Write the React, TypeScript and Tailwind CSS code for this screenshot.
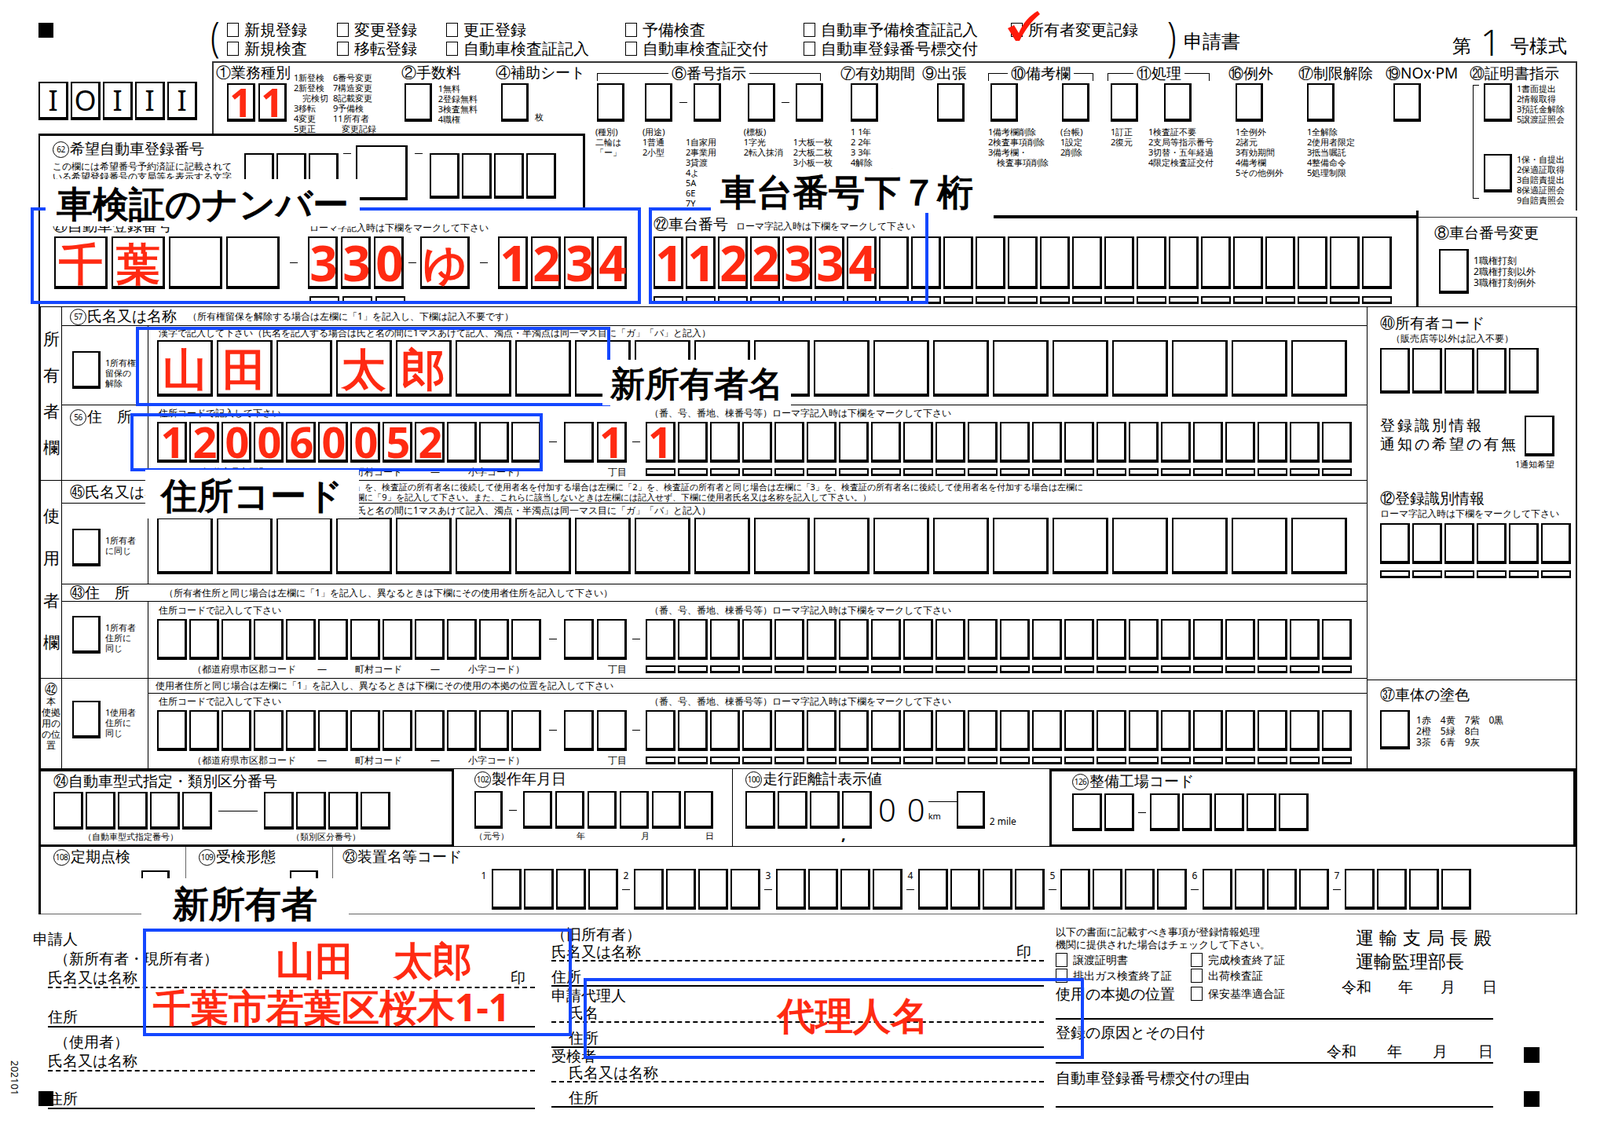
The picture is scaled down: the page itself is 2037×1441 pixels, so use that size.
import React from "react";

const Bx = ({ c, children }: { c: string; children?: React.ReactNode }) => (
  <div className={"shrink-0 flex items-center justify-center border-2 border-black border-b-[4px] border-r-[3px] bg-white overflow-visible " + c}>{children}</div>
);
const Boxes = ({ n, c, g }: { n: number; c: string; g: string }) => (
  <div className={"flex " + g}>
    {Array.from({ length: n }).map((_, i) => (
      <Bx key={i} c={c} />
    ))}
  </div>
);
const Marks = ({ n }: { n: number }) => (
  <div className="flex gap-[3px]">
    {Array.from({ length: n }).map((_, i) => (
      <div key={i} className="w-[38px] h-[10px] border-2 border-black border-b-[3px]" />
    ))}
  </div>
);
const Circ = ({ n }: { n: string }) => (
  <span className="inline-flex items-center justify-center rounded-full border border-black w-[21px] h-[21px] text-[10px] leading-none tracking-tighter mr-[1px] align-[2px]">{n}</span>
);
const Dash = ({ w }: { w: string }) => (
  <div className={"shrink-0 flex items-center justify-center " + w}>
    <div className="w-[10px] border-t border-black" />
  </div>
);
const Red = ({ t, s }: { t: string; s: string }) => (
  <span className={"text-[#ff2a12] font-bold leading-none font-['Liberation_Sans','Noto_Sans_CJK_JP',sans-serif] " + s}>{t}</span>
);
const Small = ({ t, c }: { t: string; c?: string }) => (
  <div className={"whitespace-pre text-[11px] leading-[13px] " + (c || "")}>{t}</div>
);
const Chk = () => <div className="shrink-0 w-[15px] h-[18px] border-[1.5px] border-black mr-[7px]" />;

const Bracket = ({ label, c }: { label: React.ReactNode; c: string }) => (
  <div className={"flex items-center h-[26px] " + c}>
    <div className="flex-1 self-center mt-[10px] h-[10px] border-l border-t border-black" />
    <div className="px-[4px] text-[19px] leading-[24px] whitespace-nowrap">{label}</div>
    <div className="flex-1 self-center mt-[10px] h-[10px] border-r border-t border-black" />
  </div>
);

const AddrRow = () => (
  <div className="flex flex-col pl-[11px]">
    <div className="flex h-[16px] text-[12px] leading-[16px] whitespace-nowrap">
      <div className="w-[627px] pl-[2px]">住所コードで記入して下さい</div>
      <div>（番、号、番地、棟番号等）ローマ字記入時は下欄をマークして下さい</div>
    </div>
    <div className="flex items-center h-[57px]">
      <Boxes n={12} c="w-[38px] h-[52px]" g="gap-[3px]" />
      <Dash w="w-[29px]" />
      <Boxes n={2} c="w-[38px] h-[52px]" g="gap-[4px]" />
      <Dash w="w-[24px]" />
      <Boxes n={22} c="w-[38px] h-[52px]" g="gap-[3px]" />
    </div>
    <div className="flex items-center h-[20px] text-[12px]">
      <div className="w-[574px] pl-[45px] whitespace-pre">（都道府県市区郡コード　　 —　　　町村コード　　　—　　　小字コード）</div>
      <div className="w-[48px]">丁目</div>
      <Marks n={22} />
    </div>
  </div>
);

const AddrRowRed = () => (
  <div className="flex flex-col pl-[11px]">
    <div className="flex h-[16px] text-[12px] leading-[16px] whitespace-nowrap">
      <div className="w-[627px] pl-[2px]">住所コードで記入して下さい</div>
      <div>（番、号、番地、棟番号等）ローマ字記入時は下欄をマークして下さい</div>
    </div>
    <div className="flex items-center h-[57px]">
      <div className="flex gap-[3px]">
        {Array.from({ length: 12 }).map((_, i) => {
          const d = ["1", "2", "0", "0", "6", "0", "0", "5", "2"][i];
          return (
            <Bx key={i} c="w-[38px] h-[52px]">{d ? <Red t={d} s="text-[54px] tracking-[-3px]" /> : null}</Bx>
          );
        })}
      </div>
      <Dash w="w-[29px]" />
      <div className="flex gap-[4px]">
        <Bx c="w-[38px] h-[52px]" />
        <Bx c="w-[38px] h-[52px]"><Red t="1" s="text-[54px]" /></Bx>
      </div>
      <Dash w="w-[24px]" />
      <div className="flex gap-[3px]">
        {Array.from({ length: 22 }).map((_, i) => (
          <Bx key={i} c="w-[38px] h-[52px]">{i === 0 ? <Red t="1" s="text-[54px]" /> : null}</Bx>
        ))}
      </div>
    </div>
    <div className="flex items-center h-[20px] text-[12px]">
      <div className="w-[574px] pl-[45px] whitespace-pre">（都道府県市区郡コード　　 —　　　町村コード　　　—　　　小字コード）</div>
      <div className="w-[48px]">丁目</div>
      <Marks n={22} />
    </div>
  </div>
);

const NameBoxes = ({ red }: { red?: boolean }) => {
  const chars = red ? ["山", "田", "", "太", "郎"] : [];
  return (
    <div className="flex gap-[5px]">
      {Array.from({ length: 20 }).map((_, i) => (
        <Bx key={i} c="w-[71px] h-[72px]">
          {chars[i] ? <Red t={chars[i]} s="text-[56px] font-['Noto_Sans_CJK_JP',sans-serif]" /> : null}
        </Bx>
      ))}
    </div>
  );
};

const VLabel = ({ t }: { t: string }) => (
  <div className="w-[27px] shrink-0 border-r border-black flex flex-col justify-around items-center py-[18px] text-[21px]">
    {t.split("").map((c, i) => (
      <span key={i}>{c}</span>
    ))}
  </div>
);

const ChkCol = ({ t, top }: { t: string; top: string }) => (
  <div className={"w-[110px] shrink-0 border-r border-black flex items-start pl-[13px] " + top}>
    <Bx c="w-[36px] h-[48px]" />
    <Small c="ml-[6px] mt-[8px] text-[11px] leading-[13px]" t={t} />
  </div>
);

export default function App() {
  const chassis = ["1", "1", "2", "2", "3", "3", "4"];
  const H = "text-[19px] leading-[24px] whitespace-nowrap";
  return (
    <div className="w-[2037px] h-[1441px] bg-white relative overflow-hidden text-black font-['Noto_Sans_CJK_JP',sans-serif]">
      {/* Row A */}
      <div className="h-[78px] flex items-start">
        <div className="ml-[49px] mt-[29px] w-[19px] h-[19px] bg-black shrink-0" />
        <div className="ml-[200px] mt-[24px] w-[21px] text-[42px] leading-[44px] font-light scale-y-125">(</div>
        <div className="mt-[26px] grid grid-cols-[140px_139px_228px_227px_264px_200px] text-[20px] leading-[24px] whitespace-nowrap">
          {["新規登録", "変更登録", "更正登録", "予備検査", "自動車予備検査証記入"].map((t) => (
            <div key={t} className="flex items-center">
              <Chk />
              {t}
            </div>
          ))}
          <div className="flex items-center relative">
            <Chk />
            所有者変更記録
            <svg className="absolute left-[-6px] top-[-14px]" width="44" height="42" viewBox="0 0 44 42">
              <path d="M2 24 L10 20 L16 30 C22 16 30 8 40 2 L43 6 C33 14 24 26 17 40 L12 40 Z" fill="#ff1a0a" />
            </svg>
          </div>
          {["新規検査", "移転登録", "自動車検査証記入", "自動車検査証交付", "自動車登録番号標交付"].map((t) => (
            <div key={t} className="flex items-center">
              <Chk />
              {t}
            </div>
          ))}
        </div>
        <div className="mt-[24px] ml-[-1px] w-[21px] text-[42px] leading-[44px] font-light scale-y-125">)</div>
        <div className="mt-[34px] text-[24px]">申請書</div>
        <div className="ml-auto mr-[42px] mt-[30px] flex items-end text-[24px]">
          第<span className="text-[46px] leading-[46px] mx-[12px] font-light font-['Liberation_Sans',sans-serif]">1</span>号様式
        </div>
      </div>

      {/* Row B/C */}
      <div className="flex h-[190px]">
        <div className="ml-[49px] w-[696px] flex flex-col">
          <div className="flex h-[92px]">
            <div className="w-[221px] pt-[26px] flex gap-[3px]">
              {["I", "O", "I", "I", "I"].map((t, i) => (
                <Bx key={i} c="w-[38px] h-[49px]">
                  <span className="text-[36px] font-['Liberation_Sans',sans-serif] leading-none">{t}</span>
                </Bx>
              ))}
            </div>
            <div className="w-[475px] border-t-2 border-l-2 border-[#333] flex">
              <div className="w-[240px] flex">
                <div className="flex flex-col pl-[3px] w-[100px]">
                  <div className={"h-[24px] " + H}>①業務種別</div>
                  <div className="flex gap-[4px] ml-[14px] mt-[2px]">
                    <Bx c="w-[36px] h-[49px]"><Red t="1" s="text-[50px]" /></Bx>
                    <Bx c="w-[36px] h-[49px]"><Red t="1" s="text-[50px]" /></Bx>
                  </div>
                </div>
                <Small c="ml-[2px] mt-[12px] text-[10px] leading-[13px]" t={"1新登検\n2新登検\n　完検切\n3移転\n4変更\n5更正"} />
                <Small c="ml-[6px] mt-[12px] text-[10px] leading-[13px]" t={"6番号変更\n7構造変更\n8記載変更\n9予備検\n11所有者\n　変更記録"} />
              </div>
              <div className="w-[121px] flex flex-col">
                <div className={"h-[24px] " + H}>②手数料</div>
                <div className="flex mt-[2px] ml-[4px]">
                  <Bx c="w-[35px] h-[49px]" />
                  <Small c="ml-[8px]" t={"1無料\n2登録無料\n3検査無料\n4職権"} />
                </div>
              </div>
              <div className="flex-1 flex flex-col">
                <div className={"h-[24px] " + H}>④補助シート</div>
                <div className="flex mt-[2px] ml-[7px] items-end">
                  <Bx c="w-[35px] h-[49px]" />
                  <Small c="ml-[8px]" t="枚" />
                </div>
              </div>
            </div>
          </div>
          <div className="h-[98px] border-t-[3px] border-r-[3px] border-l-2 border-black flex">
            <div className="w-[260px] pl-[16px] pt-[4px]">
              <div className={H}><Circ n="62" />希望自動車登録番号</div>
              <Small c="mt-[4px] text-[12px]" t={"この欄には希望番号予約済証に記載されて\nいる希望登録番号の支局等を表示する文字"} />
            </div>
            <div className="flex items-start mt-[22px]">
              <Boxes n={3} c="w-[38px] h-[58px]" g="gap-[3px]" />
              <Dash w="w-[22px]" />
              <div className="mt-[-10px]"><Bx c="w-[66px] h-[70px]" /></div>
              <Dash w="w-[28px]" />
              <Boxes n={4} c="w-[38px] h-[58px]" g="gap-[3px]" />
            </div>
          </div>
        </div>
        <div className="w-[1263px] border-t-2 border-r-2 border-[#333] flex text-[19px]">
          <div className="w-[315px] flex flex-col">
            <Bracket c="mx-[15px]" label="⑥番号指示" />
            <div className="flex items-center ml-[15px]">
              <Bx c="w-[35px] h-[49px]" />
              <div className="w-[26px]" />
              <Bx c="w-[35px] h-[49px]" />
              <Dash w="w-[27px]" />
              <Bx c="w-[35px] h-[49px]" />
              <div className="w-[34px]" />
              <Bx c="w-[35px] h-[49px]" />
              <Dash w="w-[26px]" />
              <Bx c="w-[35px] h-[49px]" />
            </div>
            <div className="flex ml-[13px] mt-[6px]">
              <Small c="w-[61px]" t={"(種別)\n二輪は\n「ー」"} />
              <Small c="w-[56px]" t={"(用途)\n1普通\n2小型"} />
              <Small c="w-[75px]" t={"\n1自家用\n2事業用\n3貸渡\n4よ\n5A\n6E\n7Y"} />
              <Small c="w-[64px]" t={"(標板)\n1字光\n2転入抹消"} />
              <Small t={"\n1大板一枚\n2大板二枚\n3小板一枚\n4小板二枚"} />
            </div>
          </div>
          <div className="w-[110px] flex flex-col">
            <div className="ml-[10px] h-[26px] leading-[26px] whitespace-nowrap">⑦有効期間</div>
            <div className="ml-[23px]"><Bx c="w-[35px] h-[49px]" /></div>
            <Small c="ml-[23px] mt-[6px]" t={"1 1年\n2 2年\n3 3年\n4解除\n5 1年・指定"} />
          </div>
          <div className="w-[80px] flex flex-col">
            <div className="ml-[4px] h-[26px] leading-[26px] whitespace-nowrap">⑨出張</div>
            <div className="ml-[23px]"><Bx c="w-[35px] h-[49px]" /></div>
          </div>
          <div className="w-[150px] flex flex-col">
            <Bracket c="mx-[8px]" label="⑩備考欄" />
            <div className="flex ml-[11px]">
              <Bx c="w-[35px] h-[49px]" />
              <div className="w-[56px]" />
              <Bx c="w-[35px] h-[49px]" />
            </div>
            <div className="flex ml-[8px] mt-[6px]">
              <Small c="w-[92px]" t={"1備考欄削除\n2検査事項削除\n3備考欄・\n　検査事項削除"} />
              <Small t={"(台帳)\n1設定\n2削除"} />
            </div>
          </div>
          <div className="w-[150px] flex flex-col">
            <Bracket c="mx-[10px]" label="⑪処理" />
            <div className="flex ml-[14px]">
              <Bx c="w-[35px] h-[49px]" />
              <div className="w-[33px]" />
              <Bx c="w-[35px] h-[49px]" />
            </div>
            <div className="flex ml-[14px] mt-[6px]">
              <Small c="w-[48px]" t={"1訂正\n2復元"} />
              <Small t={"1検査証不要\n2支局等指示番号\n3切替・五年経過\n4限定検査証交付"} />
            </div>
          </div>
          <div className="w-[97px] flex flex-col">
            <div className="ml-[14px] h-[26px] leading-[26px] whitespace-nowrap">⑯例外</div>
            <div className="ml-[23px]"><Bx c="w-[35px] h-[49px]" /></div>
            <Small c="ml-[23px] mt-[6px]" t={"1全例外\n2諸元\n3有効期間\n4備考欄\n5その他例外"} />
          </div>
          <div className="w-[110px] flex flex-col">
            <div className="ml-[6px] h-[26px] leading-[26px] whitespace-nowrap">⑰制限解除</div>
            <div className="ml-[17px]"><Bx c="w-[35px] h-[49px]" /></div>
            <Small c="ml-[17px] mt-[6px]" t={"1全解除\n2使用者限定\n3抵当嘱託\n4整備命令\n5処理制限"} />
          </div>
          <div className="w-[105px] flex flex-col">
            <div className="ml-[7px] h-[26px] leading-[26px] whitespace-nowrap">⑲NOx·PM</div>
            <div className="ml-[17px]"><Bx c="w-[35px] h-[49px]" /></div>
          </div>
          <div className="flex-1 flex flex-col">
            <div className="ml-[9px] h-[26px] leading-[26px] whitespace-nowrap">⑳証明書指示</div>
            <div className="flex ml-[13px]">
              <div className="w-[8px] border-l border-t border-b border-black h-[145px] mt-[2px]" />
              <div className="flex flex-col ml-[6px]">
                <div className="flex">
                  <Bx c="w-[36px] h-[49px]" />
                  <Small c="ml-[6px]" t={"1書面提出\n2情報取得\n3預託金解除\n5譲渡証照会"} />
                </div>
                <div className="flex mt-[38px]">
                  <Bx c="w-[36px] h-[49px]" />
                  <Small c="ml-[6px]" t={"1保・自提出\n2保適証取得\n3自賠責提出\n8保適証照会\n9自賠責照会"} />
                </div>
              </div>
            </div>
          </div>
        </div>
      </div>

      {/* Row D car number */}
      <div className="ml-[49px] w-[1959px] h-[122px] flex">
        <div className="w-[777px] border-l-2 border-black flex flex-col">
          <div className="h-[33px] flex items-end pb-[2px]">
            <div className={"pl-[16px] w-[343px] " + H}>㉑自動車登録番号</div>
            <div className="text-[12px]">ローマ字記入時は下欄をマークして下さい</div>
          </div>
          <div className="flex items-center pl-[18px] h-[67px]">
            <div className="flex gap-[5px]">
              {["千", "葉", "", ""].map((t, i) => (
                <Bx key={i} c="w-[68px] h-[67px]">{t ? <Red t={t} s="text-[56px] font-['Noto_Sans_CJK_JP',sans-serif]" /> : null}</Bx>
              ))}
            </div>
            <Dash w="w-[36px]" />
            <div className="flex gap-[4px]">
              {["3", "3", "0"].map((t, i) => (
                <Bx key={i} c="w-[38px] h-[67px]"><Red t={t} s="text-[62px] tracking-[-3px]" /></Bx>
              ))}
            </div>
            <Dash w="w-[21px]" />
            <Bx c="w-[63px] h-[67px]"><Red t="ゆ" s="text-[56px] font-['Noto_Sans_CJK_JP',sans-serif]" /></Bx>
            <Dash w="w-[36px]" />
            <div className="flex gap-[4px]">
              {["1", "2", "3", "4"].map((t, i) => (
                <Bx key={i} c="w-[38px] h-[67px]"><Red t={t} s="text-[62px] tracking-[-3px]" /></Bx>
              ))}
            </div>
          </div>
          <div className="ml-[343px] mt-[9px] flex gap-[4px]">
            {[0, 1, 2].map((i) => (
              <div key={i} className="w-[38px] h-[10px] border-2 border-black border-b-[3px]" />
            ))}
          </div>
        </div>
        <div className="w-[980px] border-r-[3px] border-black flex flex-col">
          <div className="h-[33px] flex items-start">
            <div className="pl-[6px] pt-[4px] text-[19px] leading-[26px] whitespace-nowrap">㉒車台番号<span className="text-[12px] ml-[10px]">ローマ字記入時は下欄をマークして下さい</span></div>
            <div className="ml-[100px] mt-[6px] flex-1 border-t-[4px] border-black" />
          </div>
          <div className="flex pl-[6px] gap-[3px] h-[67px]">
            {Array.from({ length: 23 }).map((_, i) => (
              <Bx key={i} c="w-[38px] h-[67px]">{chassis[i] ? <Red t={chassis[i]} s="text-[62px] tracking-[-3px]" /> : null}</Bx>
            ))}
          </div>
          <div className="pl-[6px] mt-[9px]"><Marks n={23} /></div>
        </div>
        <div className="flex-1 border-t border-r-2 border-[#333] mt-[8px] flex flex-col">
          <div className="pl-[20px] pt-[6px] text-[19px] leading-[26px] whitespace-nowrap">⑧車台番号変更</div>
          <div className="flex ml-[26px] mt-[8px]">
            <Bx c="w-[38px] h-[57px]" />
            <Small c="ml-[6px] mt-[8px] text-[12px] leading-[14px]" t={"1職権打刻\n2職権打刻以外\n3職権打刻例外"} />
          </div>
        </div>
      </div>

      {/* Main table */}
      <div className="ml-[49px] w-[1959px] border-l-[3px] border-r-2 border-t border-black flex flex-col">
        <div className="flex h-[588px] border-b border-black">
          <div className="w-[1689px] flex flex-col border-r border-black">
            {/* Owner */}
            <div className="h-[221px] flex border-b border-black">
              <VLabel t="所有者欄" />
              <div className="flex-1 flex flex-col">
                <div className="h-[24px] border-b border-black flex items-center pl-[10px] whitespace-nowrap">
                  <span className="text-[19px]"><Circ n="57" />氏名又は名称</span>
                  <span className="text-[12px] ml-[14px]">（所有権留保を解除する場合は左欄に「1」を記入し、下欄は記入不要です）</span>
                </div>
                <div className="h-[103px] border-b border-black flex">
                  <ChkCol top="pt-[32px]" t={"1所有権\n留保の\n解除"} />
                  <div className="flex flex-col pl-[11px]">
                    <div className="h-[18px] text-[12px] leading-[18px] pl-[2px] whitespace-nowrap">漢字で記入して下さい（氏名を記入する場合は氏と名の間に1マスあけて記入、濁点・半濁点は同一マス目に「ガ」「バ」と記入）</div>
                    <NameBoxes red />
                  </div>
                </div>
                <div className="flex-1 flex">
                  <div className="w-[110px] shrink-0 border-r border-black pl-[10px] pt-[2px] text-[19px] leading-[24px] whitespace-nowrap"><Circ n="56" />住　所</div>
                  <div className="pt-[2px]"><AddrRowRed /></div>
                </div>
              </div>
            </div>
            {/* User */}
            <div className="h-[254px] flex border-b border-black">
              <VLabel t="使用者欄" />
              <div className="flex-1 flex flex-col">
                <div className="h-[29px] border-b border-black flex items-start pl-[10px] whitespace-nowrap">
                  <span className="text-[19px] leading-[28px] w-[160px]">㊺氏名又は名称</span>
                  <Small c="text-[11px] leading-[13px] mt-[1px]" t={"（検査証の所有者と同じ場合は左欄に「1」を、検査証の所有者名に後続して使用者名を付加する場合は左欄に「2」を、検査証の所有者と同じ場合は左欄に「3」を、検査証の所有者名に後続して使用者名を付加する場合は左欄に\n「2」を、新規登録時に流用する場合は左欄に「9」を記入して下さい。また、これらに該当しないときは左欄には記入せず、下欄に使用者氏名又は名称を記入して下さい。）"} />
                </div>
                <div className="h-[103px] border-b border-black flex">
                  <ChkCol top="pt-[32px]" t={"1所有者\nに同じ"} />
                  <div className="flex flex-col pl-[11px]">
                    <div className="h-[18px] text-[12px] leading-[18px] pl-[2px] whitespace-nowrap">漢字で記入して下さい（氏名を記入する場合は氏と名の間に1マスあけて記入、濁点・半濁点は同一マス目に「ガ」「バ」と記入）</div>
                    <NameBoxes />
                  </div>
                </div>
                <div className="h-[22px] border-b border-black flex items-center pl-[10px] whitespace-nowrap">
                  <span className="text-[19px] w-[120px]">㊸住　所</span>
                  <span className="text-[12px]">（所有者住所と同じ場合は左欄に「1」を記入し、異なるときは下欄にその使用者住所を記入して下さい）</span>
                </div>
                <div className="flex-1 flex">
                  <ChkCol top="pt-[18px]" t={"1所有者\n住所に\n同じ"} />
                  <div className="pt-[3px]"><AddrRow /></div>
                </div>
              </div>
            </div>
            {/* 42 */}
            <div className="flex-1 flex">
              <div className="w-[27px] shrink-0 border-r border-black flex flex-col items-center pt-[4px]">
                <span className="text-[16px] leading-[18px]">㊷</span>
                <Small c="text-[12px] leading-[14px] text-center" t={"本\n使拠\n用の\nの位\n置"} />
              </div>
              <ChkCol top="pt-[28px]" t={"1使用者\n住所に\n同じ"} />
              <div className="flex-1 flex flex-col">
                <div className="h-[19px] border-b border-black text-[12px] leading-[18px] pl-[9px] whitespace-nowrap">使用者住所と同じ場合は左欄に「1」を記入し、異なるときは下欄にその使用の本拠の位置を記入して下さい</div>
                <div className="pt-[2px]"><AddrRow /></div>
              </div>
            </div>
          </div>
          {/* right column */}
          <div className="flex-1 flex flex-col">
            <div className="h-[475px] border-b border-black pl-[16px] pt-[8px] flex flex-col">
              <div className={H}>㊵所有者コード</div>
              <div className="text-[12px] pl-[14px] leading-[16px]">（販売店等以外は記入不要）</div>
              <div className="mt-[4px]"><Boxes n={5} c="w-[38px] h-[58px]" g="gap-[3px]" /></div>
              <div className="flex mt-[28px]">
                <div className="text-[19px] leading-[24px] whitespace-pre tracking-[3px]">{"登録識別情報\n通知の希望の有無"}</div>
                <div className="ml-[8px]"><Bx c="w-[38px] h-[52px]" /></div>
              </div>
              <div className="text-[11px] ml-[172px] mt-[2px]">1通知希望</div>
              <div className={"mt-[22px] " + H}>⑫登録識別情報</div>
              <div className="text-[12px] leading-[16px]">ローマ字記入時は下欄をマークして下さい</div>
              <div className="mt-[4px]"><Boxes n={6} c="w-[38px] h-[52px]" g="gap-[3px]" /></div>
              <div className="mt-[8px]"><Marks n={6} /></div>
            </div>
            <div className="flex-1 pl-[16px] pt-[6px]">
              <div className={H}>㊲車体の塗色</div>
              <div className="flex mt-[8px]">
                <Bx c="w-[38px] h-[50px]" />
                <Small c="ml-[8px] mt-[6px] text-[12px] leading-[14px]" t={"1赤　4黄　7紫　0黒\n2橙　5緑　8白\n3茶　6青　9灰"} />
              </div>
            </div>
          </div>
        </div>

        {/* Row 24 */}
        <div className="h-[99px] flex">
          <div className="w-[529px] border-[3px] border-black ml-[-3px] flex flex-col pl-[16px]">
            <div className={H}>㉔自動車型式指定・類別区分番号</div>
            <div className="flex items-center mt-[2px]">
              <Boxes n={5} c="w-[38px] h-[48px]" g="gap-[3px]" />
              <div className="w-[50px] mx-[8px] border-t border-black" />
              <Boxes n={4} c="w-[38px] h-[48px]" g="gap-[3px]" />
            </div>
            <div className="flex text-[11px] mt-[1px]">
              <span className="ml-[38px] w-[265px]">（自動車型式指定番号）</span>
              <span>（類別区分番号）</span>
            </div>
          </div>
          <div className="w-[355px] border-r border-b border-black flex flex-col pl-[26px]">
            <div className={H}><Circ n="102" />製作年月日</div>
            <div className="flex items-center mt-[4px]">
              <Bx c="w-[36px] h-[48px]" />
              <Dash w="w-[26px]" />
              <Boxes n={6} c="w-[37px] h-[48px]" g="gap-[4px]" />
            </div>
            <div className="flex text-[11px] mt-[1px] whitespace-pre">
              <span className="w-[130px]">（元号）</span>
              <span className="w-[82px]">年</span>
              <span className="w-[82px]">月</span>
              <span>日</span>
            </div>
          </div>
          <div className="w-[403px] border-b border-black flex flex-col pl-[16px]">
            <div className={H}><Circ n="100" />走行距離計表示値</div>
            <div className="flex items-center mt-[4px]">
              <Boxes n={4} c="w-[38px] h-[48px]" g="gap-[3px]" />
              <span className="text-[40px] leading-none ml-[8px] font-['Liberation_Sans',sans-serif] font-light">0</span>
              <span className="text-[40px] leading-none ml-[14px] font-['Liberation_Sans',sans-serif] font-light">0</span>
              <div className="flex flex-col ml-[4px] w-[36px]">
                <div className="border-t border-black mt-[6px]" />
                <span className="text-[11px] mt-[10px]">km</span>
              </div>
              <Bx c="w-[36px] h-[48px]" />
              <span className="text-[12px] self-end ml-[6px] whitespace-nowrap">2 mile</span>
            </div>
            <div className="ml-[122px] text-[20px] font-bold leading-[14px]">,</div>
          </div>
          <div className="flex-1 border-[3px] border-black flex flex-col pl-[26px]">
            <div className={H}><Circ n="126" />整備工場コード</div>
            <div className="flex items-center mt-[4px]">
              <Boxes n={2} c="w-[38px] h-[48px]" g="gap-[3px]" />
              <Dash w="w-[20px]" />
              <Boxes n={5} c="w-[38px] h-[48px]" g="gap-[3px]" />
            </div>
          </div>
        </div>

        {/* Row 108 */}
        <div className="h-[86px] flex border-b border-[#666]">
          <div className="w-[185px] border-r border-[#666] flex flex-col pl-[16px]">
            <div className={H}><Circ n="108" />定期点検</div>
            <div className="ml-[112px] mt-[6px]"><Bx c="w-[36px] h-[48px]" /></div>
          </div>
          <div className="w-[187px] border-r border-[#666] flex flex-col pl-[16px]">
            <div className={H}><Circ n="109" />受検形態</div>
            <div className="ml-[116px] mt-[6px]"><Bx c="w-[36px] h-[48px]" /></div>
          </div>
          <div className="flex-1 flex flex-col pl-[12px]">
            <div className={H}>㉓装置名等コード</div>
            <div className="flex ml-[170px] mt-[4px]">
              {[1, 2, 3, 4, 5, 6, 7].map((n) => (
                <div key={n} className="flex">
                  <div className="w-[20px] flex flex-col items-center text-[12px]">
                    <span>{n}</span>
                    {n > 1 ? <div className="w-[10px] border-t border-black mt-[8px]" /> : null}
                  </div>
                  <Boxes n={4} c="w-[38px] h-[52px]" g="gap-[3px]" />
                </div>
              ))}
            </div>
          </div>
        </div>
      </div>

      {/* Bottom */}
      <div className="flex h-[278px] text-[19px]">
        <div className="w-[61px] shrink-0 relative">
          <div className="absolute left-[18px] top-[176px] text-[13px] rotate-90 origin-left">202101</div>
          <div className="absolute left-[49px] top-[225px] w-[19px] h-[19px] bg-black" />
        </div>
        <div className="w-[620px] flex flex-col pt-[18px]">
          <div className="leading-[26px] ml-[-19px]">申請人</div>
          <div className="leading-[24px] pl-[8px]">（新所有者・現所有者）</div>
          <div className="leading-[24px] flex justify-between">
            <span className="pl-[0px]">氏名又は名称</span>
            <span className="mr-[12px]">印</span>
          </div>
          <div className="border-b-2 border-dashed border-black" />
          <div className="h-[48px] flex items-end leading-[24px]">住所</div>
          <div className="border-b-2 border-black" />
          <div className="leading-[24px] mt-[6px] pl-[8px]">（使用者）</div>
          <div className="leading-[24px]">氏名又は名称</div>
          <div className="border-b-2 border-dashed border-black" />
          <div className="h-[46px] flex items-end leading-[24px]">住所</div>
          <div className="border-b-2 border-black" />
        </div>
        <div className="w-[627px] ml-[21px] flex flex-col pt-[14px]">
          <div className="leading-[22px]">（旧所有者）</div>
          <div className="leading-[22px] flex justify-between">
            <span>氏名又は名称</span>
            <span className="mr-[16px]">印</span>
          </div>
          <div className="border-b-2 border-dashed border-black" />
          <div className="h-[30px] flex items-end leading-[22px]">住所</div>
          <div className="border-b-2 border-black" />
          <div className="leading-[22px]">申請代理人</div>
          <div className="leading-[22px] pl-[22px]">氏名</div>
          <div className="border-b-2 border-dashed border-black" />
          <div className="h-[30px] flex items-end leading-[22px] pl-[22px]">住所</div>
          <div className="border-b-2 border-black" />
          <div className="leading-[20px]">受検者</div>
          <div className="leading-[22px] pl-[22px]">氏名又は名称</div>
          <div className="border-b-2 border-dashed border-black" />
          <div className="h-[30px] flex items-end leading-[22px] pl-[22px]">住所</div>
          <div className="border-b-2 border-black" />
        </div>
        <div className="w-[562px] ml-[15px] flex flex-col pt-[14px]">
          <div className="flex h-[118px]">
            <div className="w-[392px]">
              <Small c="text-[13px] leading-[16px]" t={"以下の書面に記載すべき事項が登録情報処理\n機関に提供された場合はチェックして下さい。"} />
              <div className="grid grid-cols-[172px_1fr] text-[14px] leading-[20px] mt-[2px] whitespace-nowrap">
                <div className="flex items-center"><Chk />譲渡証明書</div>
                <div className="flex items-center"><Chk />完成検査終了証</div>
                <div className="flex items-center"><Chk />排出ガス検査終了証</div>
                <div className="flex items-center"><Chk />出荷検査証</div>
                <div className="text-[19px] leading-[26px]">使用の本拠の位置</div>
                <div className="flex items-center"><Chk />保安基準適合証</div>
              </div>
            </div>
            <div className="flex-1 flex flex-col">
              <div className="text-[23px] leading-[30px] tracking-[7px] ml-[18px] whitespace-nowrap">運輸支局長殿</div>
              <div className="text-[23px] leading-[30px] ml-[18px] whitespace-nowrap">運輸監理部長</div>
              <div className="flex justify-between mt-[4px] pr-[0px]">
                <span>令和</span><span>年</span><span>月</span><span>日</span>
              </div>
            </div>
          </div>
          <div className="w-[557px] border-b-2 border-black" />
          <div className="leading-[24px] mt-[4px]">登録の原因とその日付</div>
          <div className="flex justify-between w-[212px] ml-[345px] leading-[24px]">
            <span>令和</span><span>年</span><span>月</span><span>日</span>
          </div>
          <div className="w-[557px] border-b-2 border-black mt-[2px]" />
          <div className="leading-[24px] mt-[6px]">自動車登録番号標交付の理由</div>
          <div className="w-[557px] border-b-2 border-black mt-[24px]" />
        </div>
        <div className="relative flex-1">
          <div className="absolute left-[34px] top-[169px] w-[20px] h-[20px] bg-black" />
          <div className="absolute left-[34px] top-[225px] w-[20px] h-[20px] bg-black" />
        </div>
      </div>

      {/* Overlays: blue frames */}
      <div className="absolute left-[39px] top-[264px] w-[777px] h-[123px] border-[4px] border-[#1447ff]" />
      <div className="absolute left-[826px] top-[264px] w-[356px] h-[123px] border-[4px] border-[#1447ff]" />
      <div className="absolute left-[173px] top-[416px] w-[604px] h-[101px] border-[4px] border-[#1447ff]" />
      <div className="absolute left-[166px] top-[526px] w-[525px] h-[74px] border-[4px] border-[#1447ff]" />
      <div className="absolute left-[182px] top-[1182px] w-[546px] h-[137px] border-[4px] border-[#1447ff]" />
      <div className="absolute left-[743px] top-[1245px] w-[637px] h-[103px] border-[4px] border-[#1447ff]" />

      {/* Overlay labels */}
      <div className="absolute left-[58px] top-[228px] bg-white px-[14px] text-[46px] font-bold leading-[60px] whitespace-nowrap">車検証のナンバー</div>
      <div className="absolute left-[905px] top-[215px] bg-white px-[12px] text-[46px] font-bold leading-[56px] whitespace-nowrap">車台番号下７桁</div>
      <div className="absolute left-[767px] top-[458px] bg-white px-[10px] text-[44px] font-bold leading-[58px] whitespace-nowrap">新所有者名</div>
      <div className="absolute left-[185px] top-[598px] bg-white px-[20px] text-[46px] font-bold leading-[62px] whitespace-nowrap">住所コード</div>
      <div className="absolute left-[180px] top-[1118px] bg-white px-[40px] text-[46px] font-bold leading-[62px] whitespace-nowrap">新所有者</div>

      {/* Red overlay text */}
      <div className="absolute left-[351px] top-[1192px] text-[#ff2a12] text-[50px] font-bold leading-[60px] whitespace-pre">山田　太郎</div>
      <div className="absolute left-[195px] top-[1254px] text-[#ff2a12] text-[48px] font-bold leading-[56px] whitespace-pre">千葉市若葉区桜木1-1</div>
      <div className="absolute left-[990px] top-[1262px] text-[#ff2a12] text-[48px] font-bold leading-[60px] whitespace-pre">代理人名</div>
    </div>
  );
}
